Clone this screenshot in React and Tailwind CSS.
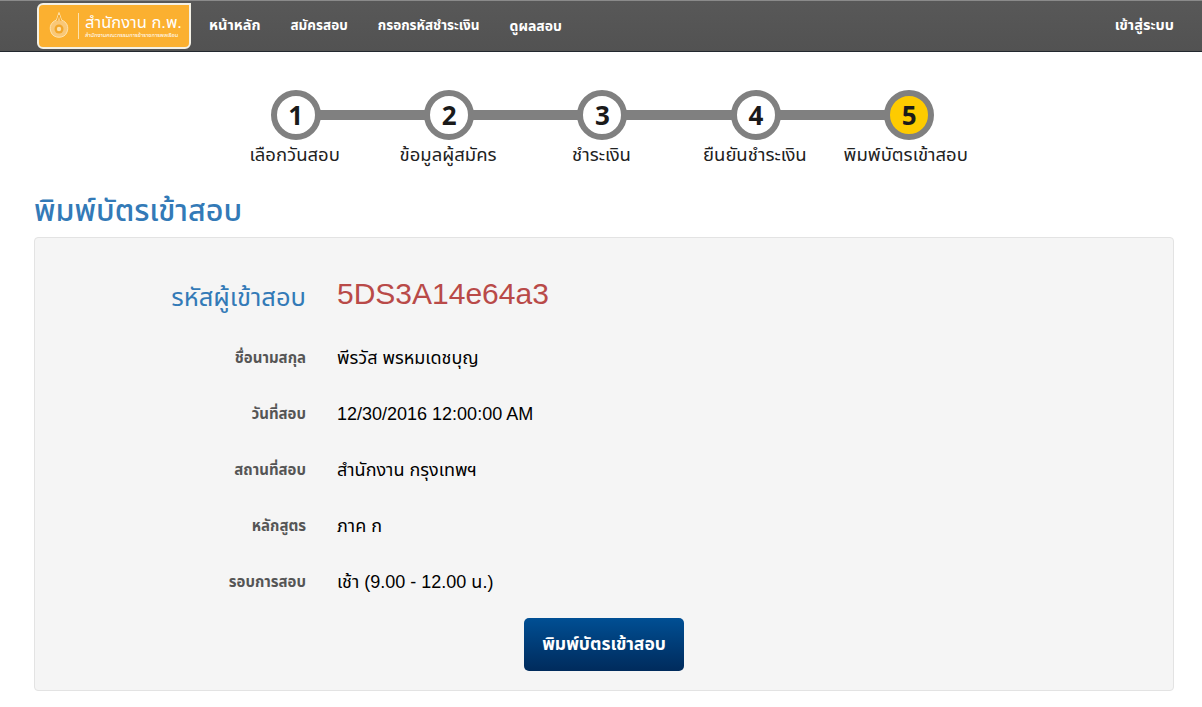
import React from 'react';

const FONT = '"Liberation Sans", "Noto Sans", "Noto Sans Thai", "DejaVu Sans", sans-serif';

const steps = [
  { n: 1, label: 'เลือกวันสอบ' },
  { n: 2, label: 'ข้อมูลผู้สมัคร' },
  { n: 3, label: 'ชำระเงิน' },
  { n: 4, label: 'ยืนยันชำระเงิน' },
  { n: 5, label: 'พิมพ์บัตรเข้าสอบ', active: true },
];

const rows = [
  ['ชื่อนามสกุล', 'พีรวัส พรหมเดชบุญ'],
  ['วันที่สอบ', '12/30/2016 12:00:00 AM'],
  ['สถานที่สอบ', 'สำนักงาน กรุงเทพฯ'],
  ['หลักสูตร', 'ภาค ก'],
  ['รอบการสอบ', 'เช้า (9.00 - 12.00 น.)'],
];

const Logo = () => (
  <div className="w-[154px] h-[46px] rounded-[6px] rounded-tr-none border-2 border-[#f4f1e6] bg-[#fbb030] flex items-center overflow-hidden">
    <svg width="20" height="28" viewBox="0 0 20 28" className="ml-[10px] shrink-0">
      <path d="M10 0.5 L12.5 8 C18 10 20 15 18 20 C16 27 4 27 2 20 C0 15 2 10 7.5 8 Z" fill="#f9c878" stroke="#fde2ae" />
      <path d="M10 3 L8 9 M10 3 L12 9" stroke="#f2a62a" fill="none" />
      <circle cx="10" cy="17" r="4.5" fill="#f2a62a" />
      <circle cx="10" cy="17" r="2.2" fill="#fde2ae" />
    </svg>
    <div className="w-px h-[26px] bg-[#fde2ae] ml-[9px] shrink-0" />
    <div className="ml-[6px] flex flex-col text-white">
      <span className="text-[16.5px] leading-[19px] whitespace-nowrap">สำนักงาน ก.พ.</span>
      <span className="text-[5.7px] leading-[7px] whitespace-nowrap">สำนักงานคณะกรรมการข้าราชการพลเรือน</span>
    </div>
  </div>
);

export default function App() {
  return (
    <div className="min-h-[707px] bg-white" style={{ fontFamily: FONT }}>
      {/* Navbar */}
      <div className="h-[52px] bg-gradient-to-b from-[#585858] to-[#525252] border-t border-t-[#8a8a8a] border-b border-b-[#22282e] flex items-center pl-[37px] pr-[28px]">
        <Logo />
        <nav className="flex items-center gap-[30px] ml-[18px] font-bold text-white">
          <a className="text-[14.5px]">หน้าหลัก</a>
          <a className="text-[13.5px]">สมัครสอบ</a>
          <a className="text-[13.5px]">กรอกรหัสชำระเงิน</a>
          <a className="text-[14px]">ดูผลสอบ</a>
        </nav>
        <a className="ml-auto text-[14.5px] font-bold text-white">เข้าสู่ระบบ</a>
      </div>

      {/* Steps */}
      <div className="flex justify-center pt-[38px]">
        <div className="flex w-[767px] ml-[3px]">
          {steps.map((s, i) => (
            <div key={s.n} className="relative w-[153.4px] flex flex-col items-center">
              {i < steps.length - 1 && (
                <div className="absolute left-1/2 top-[20px] w-full h-[10px] bg-[#808080]" />
              )}
              <div
                className={`relative w-[50px] h-[50px] rounded-full border-[6px] border-[#808080] flex items-center justify-center text-[26px] font-bold text-[#1a1a1a] ${
                  s.active ? 'bg-[#fecb00]' : 'bg-white'
                }`}
                style={{ fontFamily: '"Open Sans", sans-serif' }}
              >
                {s.n}
              </div>
              <div className={`mt-[3px] text-[18.5px] leading-[24px] text-[#222] whitespace-nowrap ${s.active ? 'pr-[7px]' : 'pr-[2px]'}`}>
                {s.label}
              </div>
            </div>
          ))}
        </div>
      </div>

      {/* Title */}
      <div className="pl-[34px] pr-[28px]">
        <h2 className="mt-[23px] text-[30.5px] leading-[40px] font-medium text-[#337ab7]">พิมพ์บัตรเข้าสอบ</h2>

        {/* Panel */}
        <div className="mt-[7px] h-[454px] bg-[#f5f5f5] border border-[#e3e3e3] rounded-[4px] flex flex-col">
          <div className="flex items-center mt-[36px] h-[40px]">
            <div className="w-[271px] text-right text-[25.5px] text-[#337ab7] pt-[6px] whitespace-nowrap">รหัสผู้เข้าสอบ</div>
            <div className="ml-[31px] text-[30px] leading-[40px] text-[#b94a48]">5DS3A14e64a3</div>
          </div>
          <div className="flex flex-col mt-[16px]">
            {rows.map(([label, value]) => (
              <div key={label} className="flex items-center h-[56px]">
                <div className="w-[271px] text-right text-[15px] font-bold text-[#555]">{label}</div>
                <div className="ml-[31px] text-[18px] text-black">{value}</div>
              </div>
            ))}
          </div>
          <div className="flex justify-center mt-[8px]">
            <button className="w-[160px] h-[53px] rounded-[5px] bg-gradient-to-b from-[#004f94] to-[#002b5c] text-white text-[17.5px] font-bold">
              พิมพ์บัตรเข้าสอบ
            </button>
          </div>
        </div>
      </div>
    </div>
  );
}
